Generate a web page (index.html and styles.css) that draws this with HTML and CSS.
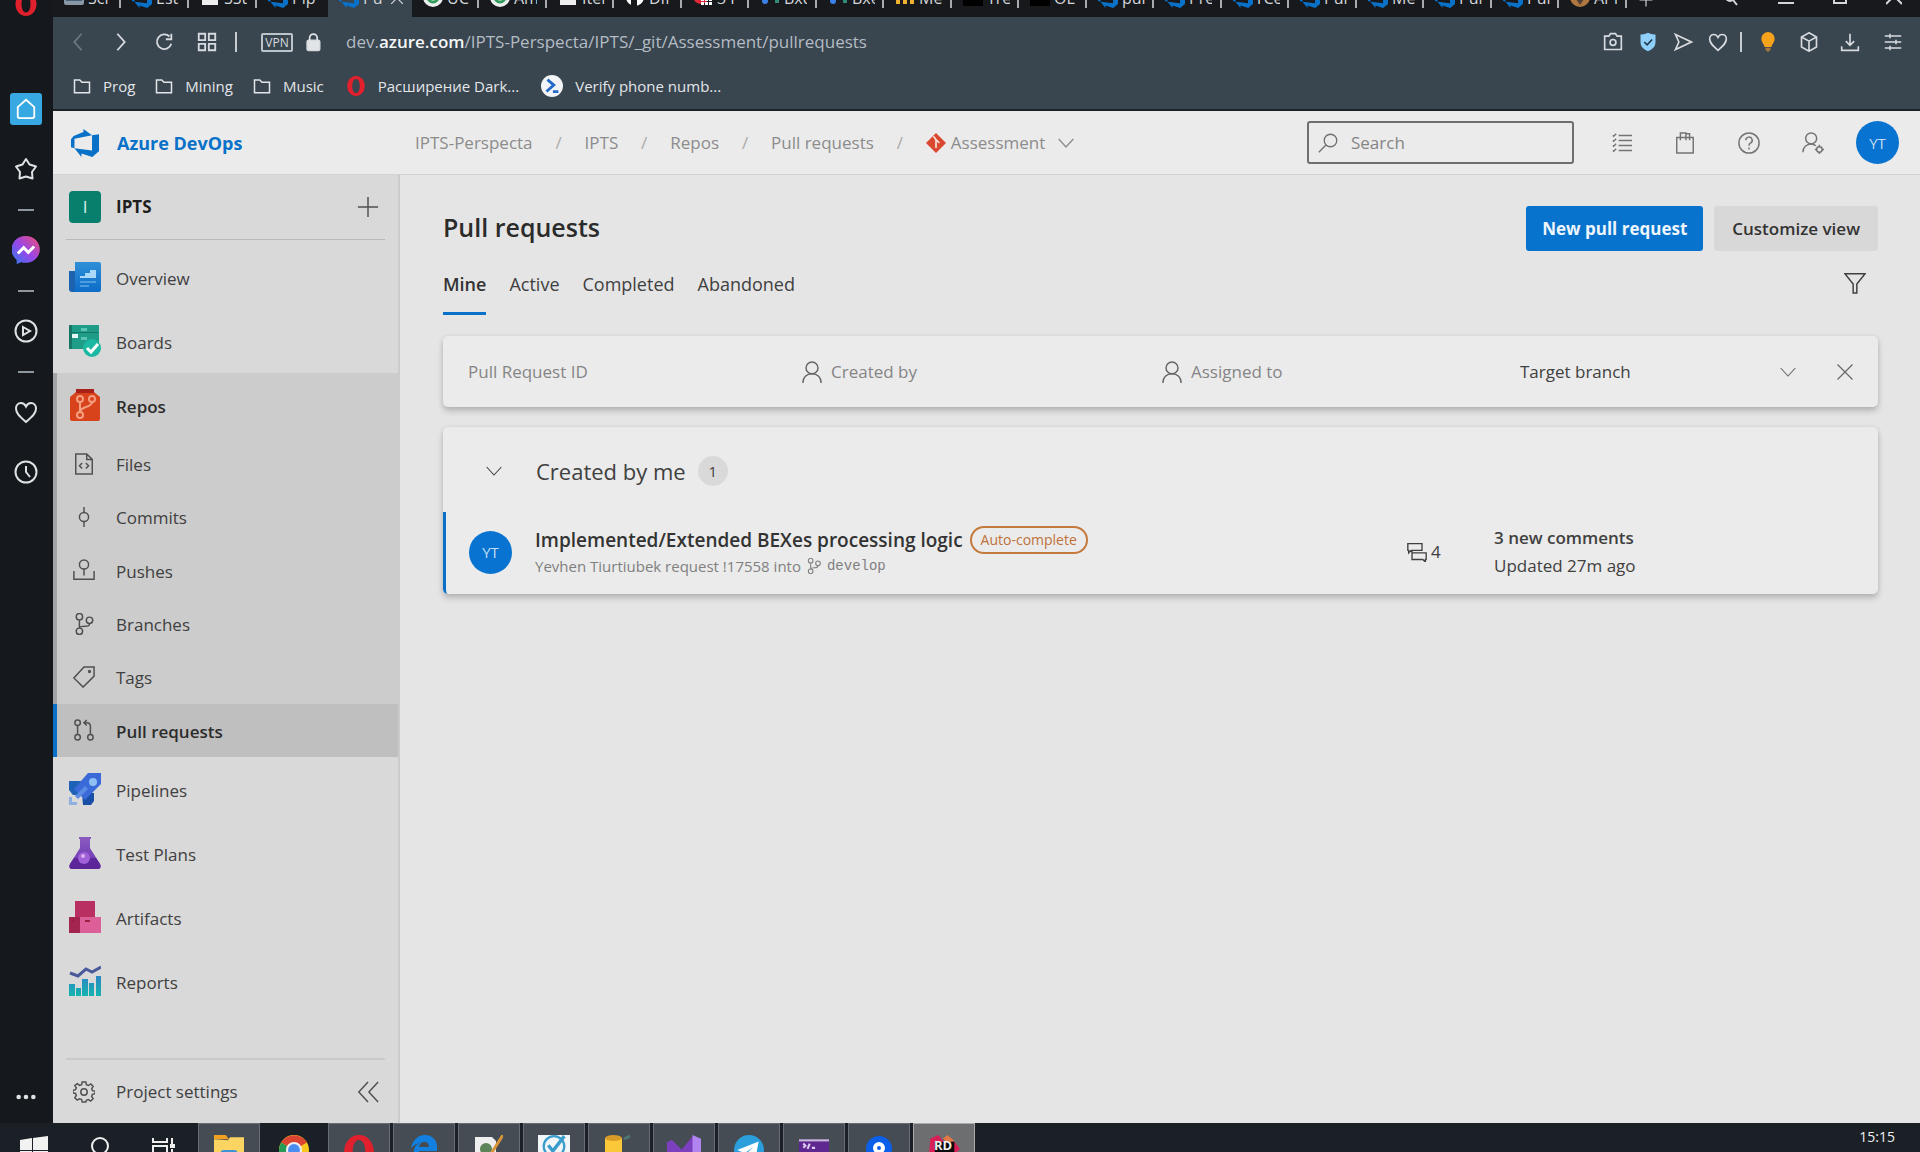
FILE: index.html
```html
<!DOCTYPE html>
<html lang="en">
<head>
<meta charset="utf-8">
<title>Pull requests - Azure DevOps</title>
<meta name="viewport" content="width=device-width, initial-scale=1">
<link rel="stylesheet" href="styles.css">
</head>
<body>
<svg class="sprite" aria-hidden="true">
  <defs>
    <linearGradient id="g-msg" x1="0" y1="1" x2="1" y2="0"><stop offset="0" stop-color="#2d7cf0"/><stop offset=".5" stop-color="#9a45e8"/><stop offset="1" stop-color="#f0506e"/></linearGradient>
    <linearGradient id="g-blue" x1="0" y1="0" x2="0" y2="1"><stop offset="0" stop-color="#2f90d8"/><stop offset="1" stop-color="#0c6cc8"/></linearGradient>
    <linearGradient id="g-flask" x1="0" y1="0" x2="0" y2="1"><stop offset="0" stop-color="#8a5cc0"/><stop offset="1" stop-color="#6a30b0"/></linearGradient>
    <linearGradient id="g-bar" x1="0" y1="0" x2="0" y2="1"><stop offset="0" stop-color="#2b86c4"/><stop offset="1" stop-color="#15b5b0"/></linearGradient>
  </defs>
  <symbol id="i-azdo" viewBox="0 0 24 24"><path fill="#0972c8" d="M0 8.877L2.247 5.91l8.405-3.416V.022l7.37 5.393L2.966 8.338v8.225L0 15.707zm24-4.45v14.651l-5.753 4.9-9.303-3.057v3.056l-5.978-7.416 15.057 1.798V5.415z"/></symbol>
  <symbol id="i-opera" viewBox="0 0 24 24"><path fill="#e0202c" fill-rule="evenodd" d="M12 0c6 0 10.500 5.200 10.500 12S18 24 12 24 1.500 18.800 1.500 12 6 0 12 0zm0 3.500C9 3.500 7.500 7.500 7.500 12S9 20.500 12 20.500s4.500-4 4.500-8.500S15 3.500 12 3.500z"/></symbol>
  <symbol id="i-monitor" viewBox="0 0 20 20"><rect width="20" height="17" rx="2" fill="#8a97a5"/><rect x="2" y="3" width="16" height="10" fill="#45607a"/></symbol>
  <symbol id="i-doc" viewBox="0 0 20 20"><path fill="#eee" d="M2 0h12l4 4v13H2z"/></symbol>
  <symbol id="i-target" viewBox="0 0 20 20"><circle cx="10" cy="9" r="10" fill="#eee"/><circle cx="10" cy="9" r="5" fill="none" stroke="#2e9b58" stroke-width="3"/><path d="M10 5l4 4" stroke="#d04030" stroke-width="3"/></symbol>
  <symbol id="i-github" viewBox="0 0 20 20"><circle cx="10" cy="9" r="9" fill="#fff"/><path d="M6 19v-7h6v7" fill="#17191c"/></symbol>
  <symbol id="i-redgrid" viewBox="0 0 20 20"><circle cx="8" cy="8" r="8" fill="#e02838"/><path fill="#fff" d="M8 10h3v3H8zm4 0h3v3h-3zm4 0h3v3h-3zM8 14h3v3H8zm4 0h3v3h-3zm4 0h3v3h-3z"/></symbol>
  <symbol id="i-dots2" viewBox="0 0 20 20"><circle cx="5" cy="13" r="3" fill="#3b7fe8"/><rect x="15" y="10" width="4" height="5" fill="#2f8a78"/></symbol>
  <symbol id="i-bars3" viewBox="0 0 20 20"><path fill="#f0b030" d="M1 6h4v10H1zm7 0h4v10H8zm7 0h4v10h-4z"/></symbol>
  <symbol id="i-black" viewBox="0 0 20 20"><rect width="20" height="18" fill="#000"/></symbol>
  <symbol id="i-bear" viewBox="0 0 20 20"><circle cx="10" cy="9" r="10" fill="#b07840"/><path d="M6 11l4 6 4-6z" fill="#504038"/></symbol>

  <symbol id="i-back" viewBox="0 0 24 24"><path d="M16 3l-8 9 8 9"/></symbol>
  <symbol id="i-fwd" viewBox="0 0 24 24"><path d="M8 3l8 9-8 9"/></symbol>
  <symbol id="i-reload" viewBox="0 0 24 24"><path d="M20 14a8 8 0 1 1-2-8M20 3v6h-6"/></symbol>
  <symbol id="i-grid" viewBox="0 0 24 24"><path d="M3 3h7v7H3zM14 3h7v7h-7zM3 14h7v7H3zM14 14h7v7h-7z"/></symbol>
  <symbol id="i-lock" viewBox="0 0 24 24"><rect x="5" y="10" width="15" height="12" rx="2" fill="#e2e5e8"/><path d="M8 11V7a4.500 4.500 0 0 1 9 0v4" stroke="#e2e5e8"/></symbol>
  <symbol id="i-camera" viewBox="0 0 24 24"><path d="M2 5h5l2-3h6l2 3h5v16H2z"/><circle cx="12" cy="12.500" r="3.500"/></symbol>
  <symbol id="i-shield" viewBox="0 0 24 24"><path fill="#8fd0fb" stroke="none" d="M12 1c4 2 7 2 9 2v9c0 6-4 9-9 11-5-2-9-5-9-11V3c2 0 5 0 9-2z"/><path stroke="#23394a" d="M7.500 12l3.500 3.500L17 9"/></symbol>
  <symbol id="i-send" viewBox="0 0 24 24"><path d="M3 3l19 9-19 9 4-9z"/></symbol>
  <symbol id="i-heart" viewBox="0 0 24 24"><path d="M12 22C5 16 2 13 2 8.500 2 5 4.500 3 7 3s4 1.500 5 3.500C13 4.500 14.500 3 17 3s5 2 5 5.500C22 13 19 16 12 22z"/></symbol>
  <symbol id="i-bulb" viewBox="0 0 24 24"><path fill="#f5a31c" stroke="none" d="M12 0a8 8 0 0 1 8 8c0 4-3 6-4 10H8C7 14 4 12 4 8a8 8 0 0 1 8-8z"/><path fill="#a07840" stroke="none" d="M9 19h6v3l-3 2-3-2z"/></symbol>
  <symbol id="i-cube" viewBox="0 0 24 24"><path d="M12 1l9 5v12l-9 5-9-5V6zM3 6l9 5 9-5M12 11v12"/></symbol>
  <symbol id="i-download" viewBox="0 0 24 24"><path d="M12 2v14M7 11l5 5 5-5M2 17v5h20v-5"/></symbol>
  <symbol id="i-sliders" viewBox="0 0 24 24"><path d="M1 4h22M1 12h22M1 20h22M8 1v6M16 9v6M8 17v6"/></symbol>
  <symbol id="i-folder" viewBox="0 0 24 24"><path d="M2 4h7l3 3h10v14H2z"/></symbol>
  <symbol id="i-ps" viewBox="0 0 24 24"><circle cx="12" cy="12" r="12" fill="#f2f4f6" stroke="none"/><path stroke="#2468c8" stroke-width="3" d="M7 5l7 6-8 7M13 18h6"/></symbol>

  <symbol id="i-home" viewBox="0 0 24 24"><path d="M3 10l9-8 9 8v10q0 2-2 2H5q-2 0-2-2z"/></symbol>
  <symbol id="i-star" viewBox="0 0 24 24"><path stroke-linejoin="round" d="M12 2l3.500 5.500 6.500 2-4 5.500.5 6.500-6.500-2-6.500 2L6 15 2 9.500l6.500-2z"/></symbol>
  <symbol id="i-messenger" viewBox="0 0 24 24"><path fill="url(#g-msg)" stroke="none" d="M12 0a12 11.500 0 1 1-4 22.400L4 24v-3.500A11.500 11.500 0 0 1 12 0z"/><path stroke="#fff" stroke-width="2.500" d="M5 15l5-5 4 4 5-5"/></symbol>
  <symbol id="i-play" viewBox="0 0 24 24"><circle cx="12" cy="12" r="10.500"/><path d="M9 8l7 4-7 4z"/></symbol>
  <symbol id="i-clock" viewBox="0 0 24 24"><circle cx="12" cy="12" r="10.500"/><path d="M12 6v6l4 5"/></symbol>
  <symbol id="i-more" viewBox="0 0 24 24"><g fill="#dfe2e5" stroke="none"><circle cx="4" cy="12" r="2.500"/><circle cx="12" cy="12" r="2.500"/><circle cx="20" cy="12" r="2.500"/></g></symbol>

  <symbol id="i-git" viewBox="0 0 24 24"><path fill="#d9482f" stroke="none" d="M12 0l12 12-12 12L0 12z"/><path stroke="#f6e4dc" stroke-width="2" d="M9 4l3 4v10M12 8l4 4"/></symbol>
  <symbol id="i-chev" viewBox="0 0 24 24"><path d="M1 6l11 12L23 6"/></symbol>
  <symbol id="i-search" viewBox="0 0 24 24"><circle cx="15" cy="9" r="7.500"/><path d="M9.500 14.500L1 23"/></symbol>
  <symbol id="i-list" viewBox="0 0 24 24"><path d="M8 3h16M8 9h16M8 15h16M8 21h16M1 3l1 1 3-3M1 9l1 1 3-3M1 15l1 1 3-3M1 21l1 1 3-3"/></symbol>
  <symbol id="i-bag" viewBox="0 0 24 24"><path d="M3 6h18v17H3zM7 9V1h6v8M13 2h4v7"/></symbol>
  <symbol id="i-help" viewBox="0 0 24 24"><circle cx="12" cy="12" r="11"/><path d="M8.500 9a3.500 3.500 0 1 1 5 3.200c-1 .6-1.500 1.300-1.500 2.800M12 17v2"/></symbol>
  <symbol id="i-usergear" viewBox="0 0 24 24"><circle cx="10" cy="7" r="6"/><path d="M1 22c0-5 4-9 9-9 2 0 4 1 5 2"/><circle cx="19" cy="19" r="3"/><path d="M19 14v2M19 22v2M14 19h2M22 19h2"/></symbol>
  <symbol id="i-user" viewBox="0 0 24 24"><circle cx="12" cy="7.500" r="6.500"/><path d="M2 24c0-6 4-10 10-10s10 4 10 10"/></symbol>
  <symbol id="i-plus" viewBox="0 0 24 24"><path d="M12 1v22M1 12h22"/></symbol>
  <symbol id="i-x" viewBox="0 0 24 24"><path d="M2 2l20 20M22 2L2 22"/></symbol>
  <symbol id="i-funnel" viewBox="0 0 24 24"><path d="M1 2h22l-9 11v10h-4V13z"/></symbol>
  <symbol id="i-collapse" viewBox="0 0 24 24"><path d="M12 1L2 12l10 11M23 1L13 12l10 11"/></symbol>
  <symbol id="i-gear" viewBox="0 0 24 24"><path d="M10 1h4l.6 3 2.200.9L19.400 3.200l2.600 2.700-1.600 2.500.8 2.100 2.800.5v3l-2.800.6-.9 2.200 1.700 2.500-2.700 2.600-2.500-1.600-2.200.8L14 23h-4l-.6-2.900-2.200-.8-2.500 1.600L2 18.300l1.600-2.500-.8-2.200L0 13v-3l2.800-.5.8-2.100L2 4.900l2.700-2 2.500 1.900L9.400 4z"/><circle cx="12" cy="12" r="3.500"/></symbol>
  <symbol id="i-file" viewBox="0 0 24 24"><path d="M3 1h12l6 6v16H3zM15 1v6h6M10 11l-3 3 3 3M14 11l3 3-3 3"/></symbol>
  <symbol id="i-commit" viewBox="0 0 24 24"><circle cx="12" cy="12" r="5"/><path d="M12 1v6M12 17v6"/></symbol>
  <symbol id="i-push" viewBox="0 0 24 24"><circle cx="12" cy="6" r="5"/><path d="M12 11v7M1 13v9h22v-9"/></symbol>
  <symbol id="i-branch" viewBox="0 0 24 24"><circle cx="7" cy="4" r="3.500"/><circle cx="7" cy="20" r="3.500"/><circle cx="18" cy="8" r="3.500"/><path d="M7 7.500v9M18 11.500c0 3-2 3-5 3s-6 0-6 2"/></symbol>
  <symbol id="i-tag" viewBox="0 0 24 24"><path d="M12 1h11v10L11 23 1 13z"/><circle cx="18" cy="6" r="1"/></symbol>
  <symbol id="i-pr" viewBox="0 0 24 24"><circle cx="5" cy="4" r="3"/><circle cx="5" cy="20" r="3"/><circle cx="19" cy="20" r="3"/><path d="M5 7v10M19 17V8q0-4-4-4h-3M15 1l-3 3 3 3"/></symbol>
  <symbol id="i-comments" viewBox="0 0 24 24"><path d="M1 2h17v8H5l-3 3v-3H1zM6 10v3h17v8h-1v3l-3-3H6v-8"/></symbol>

  <symbol id="p-overview" viewBox="0 0 32 32"><path fill="#1c62ae" d="M0 10h8v21H3q-3 0-3-3z"/><path fill="url(#g-blue)" d="M6 1h24q2 0 2 2v26q0 2-2 2H3q3 0 3-3z"/><path fill="#a9d8f8" d="M11 15h5v-3h5V9h6v8H11z"/><path fill="#4b9ce0" d="M11 20h16v2H11zM11 24h9v2h-9z"/></symbol>
  <symbol id="p-boards" viewBox="0 0 32 32"><path fill="#1f9c88" d="M1 0h29v24H1q-1 0-1-1V1q0-1 1-1z"/><path fill="#177565" d="M0 0h3v24H0zM3 7h26v1H3z"/><path fill="#5cc4b2" d="M12 3h6v3h-6zM12 12h6v3h-6z"/><path fill="#e8f6f3" d="M3 9h6v4H3z"/><circle cx="23" cy="23" r="9" fill="#1cb8a2"/><path fill="none" stroke="#fff" stroke-width="3" d="M18 23l4 4 7-8"/></symbol>
  <symbol id="p-repos" viewBox="0 0 32 32"><path fill="#d9431c" d="M7 3h18l6 5v22q0 2-2 2H3q-2 0-2-2V8z"/><path fill="#a8201a" d="M7 0h18v4H7z"/><g fill="none" stroke="#f4a080" stroke-width="2"><circle cx="11" cy="10" r="3"/><circle cx="23" cy="10" r="3"/><circle cx="11" cy="26" r="3"/><path d="M11 13v10M23 13c0 6-12 4-12 10"/></g></symbol>
  <symbol id="p-pipelines" viewBox="0 0 32 32"><path fill="#1e62b8" d="M0 8h12v14H4l-4-5z"/><path fill="#1a4fa8" d="M13 20h12v8l-3 4h-8z"/><path fill="#3a6ad8" d="M19 0h13v11L16 27 5 16z"/><circle cx="24" cy="9" r="4" fill="#8fc0f4"/><path fill="#5b8be4" d="M16 13l3 3-10 10-3-3z"/><path fill="#8fb0e0" d="M0 24h3v5h5v3H0z"/></symbol>
  <symbol id="p-flask" viewBox="0 0 32 32"><path fill="url(#g-flask)" d="M10 0h12v2h-1v9l10 16q2 5-3 5H4q-5 0-3-5l10-16V2h-1z"/><path fill="#5c259a" d="M5 21h22l4 6q2 5-3 5H4q-5 0-3-5z"/><circle cx="15" cy="21" r="6" fill="#a060d8"/><circle cx="14" cy="19" r="2" fill="#d8b0f0"/></symbol>
  <symbol id="p-artifacts" viewBox="0 0 32 32"><path fill="#b92f62" d="M6 0h20v17H6z"/><path fill="#a3244e" d="M0 16h12v16H0z"/><path fill="#dc5f98" d="M11 16h21v16H11z"/><path fill="#9a2048" d="M16 19h5v2h-5zM3 18h2v3H3z"/></symbol>
  <symbol id="p-reports" viewBox="0 0 32 32"><path fill="url(#g-bar)" d="M0 19h6v12H0zM7 23h5v8H7zM13 14h6v17h-6zM20 18h5v13h-5zM27 11h5v20h-5z"/><path fill="none" stroke="#4a5a9a" stroke-width="3" d="M1 8l8 3 8-7 6 3 9-5"/></symbol>

  <symbol id="t-win" viewBox="0 0 28 28"><path fill="#f2f2f2" d="M0 4l12-2v12H0zM13 2l15-2v14H13zM0 15h12v12L0 25zM13 15h15v13l-15-1z"/></symbol>
  <symbol id="t-search" viewBox="0 0 28 28"><circle cx="15" cy="10" r="8"/><path d="M9 16l-7 8"/></symbol>
  <symbol id="t-view" viewBox="0 0 28 28"><path d="M3 2v4h14V2M3 10h14v14H3zM22 2v6M22 13v11"/><path fill="#eee" stroke="none" d="M20 8h5v4h-5z"/></symbol>
  <symbol id="t-folder" viewBox="0 0 28 28"><path fill="#f0a020" d="M0 0h11l3 4H0z"/><path fill="#fcd462" d="M0 4l13 1 2-3h13v24H0z"/><path fill="#3d92d8" d="M6 26V17q0-3 3-3h10q3 0 3 3v9z"/></symbol>
  <symbol id="t-chrome" viewBox="0 0 28 28"><circle cx="14" cy="14" r="14" fill="#f8c820"/><path fill="#dc4432" d="M14 14L2 7a14 14 0 0 1 24 0z"/><path fill="#279a55" d="M14 14L2 7a14 14 0 0 0 10 21z"/><circle cx="14" cy="14" r="6.500" fill="#4a8cf0" stroke="#eee" stroke-width="2"/></symbol>
  <symbol id="t-edge" viewBox="0 0 28 28"><path fill="#1180e0" d="M1 13C3 4 9 0 15 0c8 0 12 6 12 12v4H9c0 8 10 9 17 5v6C14 32 2 27 4 15c1-5 5-7 8-8-3 1-7 2-11 6zm8-1h10c0-7-9-7-10 0z"/></symbol>
  <symbol id="t-note" viewBox="0 0 28 28"><path fill="#eee" d="M0 2h17l4 4v22H0z"/><circle cx="11" cy="14" r="6" fill="#5d8458"/><path stroke="#d79538" stroke-width="3" d="M28 0L14 22"/></symbol>
  <symbol id="t-todo" viewBox="0 0 28 28"><path fill="#f2f6f8" d="M0 0h28v28H0z"/><circle cx="14" cy="10" r="9" fill="none" stroke="#3a9ccc" stroke-width="2"/><path fill="none" stroke="#3a9ccc" stroke-width="3" d="M9 9l4 5 10-13"/></symbol>
  <symbol id="t-db" viewBox="0 0 28 28"><path fill="#fac838" d="M0 3h17v25H0z"/><ellipse cx="8.500" cy="3" rx="8.500" ry="3" fill="#d99b28"/><path stroke="#4e7774" stroke-width="3" d="M19 4l6-3M14 19h10"/></symbol>
  <symbol id="t-vs" viewBox="0 0 28 28"><path fill="#7c40bf" d="M0 6l4-2 8 8L22 0v28H17l-5-8-8 6-4-2z"/><path fill="#b184f0" d="M21 0l7 3v25h-7z"/></symbol>
  <symbol id="t-telegram" viewBox="0 0 28 28"><circle cx="14" cy="14" r="14" fill="#2a9fdb"/><path fill="#fff" d="M3 14l20-8-3 16-8-5 6-6-8 6z"/></symbol>
  <symbol id="t-term" viewBox="0 0 28 28"><path fill="#5f2890" d="M0 4h28v24H0z"/><path fill="#c8b8d8" d="M0 4h28v2H0z"/><path fill="none" stroke="#ddc8ee" d="M4 8l2 2-2 2M8 13l2-5M12 12h3"/></symbol>
  <symbol id="t-pin" viewBox="0 0 28 28"><circle cx="14" cy="14" r="13" fill="#0b5fe8"/><circle cx="14" cy="13" r="4" fill="none" stroke="#fff" stroke-width="4"/></symbol>
  <symbol id="t-rider" viewBox="0 0 28 28"><path fill="#d91f58" d="M2 3l7-3 5 6 9 0 5 6-5 5 2 11H0z"/><path fill="#e07848" d="M13 3l4-3 6 5-6 2z"/><path fill="#0a0a0a" d="M6 6h17v17H6z"/></symbol>
</svg>

<div class="browser">
  <aside class="rail">
    <a class="rail-logo" href="#" aria-label="Opera menu"><svg class="ic24"><use href="#i-opera"/></svg></a>
    <div class="rail-items">
      <a class="rail-home" href="#" aria-label="Start page"><svg class="ic22"><use href="#i-home"/></svg></a>
      <a href="#" aria-label="Bookmarks"><svg class="ic24"><use href="#i-star"/></svg></a>
      <span class="dash"></span>
      <a href="#" aria-label="Messenger"><svg class="ic28"><use href="#i-messenger"/></svg></a>
      <span class="dash"></span>
      <a href="#" aria-label="Player"><svg class="ic24"><use href="#i-play"/></svg></a>
      <span class="dash"></span>
      <a href="#" aria-label="Favourites"><svg class="ic24"><use href="#i-heart"/></svg></a>
      <a href="#" aria-label="History"><svg class="ic24"><use href="#i-clock"/></svg></a>
    </div>
    <button class="rail-more" aria-label="More"><svg class="ic22"><use href="#i-more"/></svg></button>
  </aside>

  <div class="window">
    <div class="tabstrip">
      <div class="tab"><svg class="ic20"><use href="#i-monitor"/></svg><span>Scr</span></div>
      <div class="tab"><svg class="ic20"><use href="#i-azdo"/></svg><span>Esti</span></div>
      <div class="tab"><svg class="ic20"><use href="#i-doc"/></svg><span>SSt</span></div>
      <div class="tab tab-last"><svg class="ic20"><use href="#i-azdo"/></svg><span>Pip</span></div>
      <div class="tab tab-active"><svg class="ic20"><use href="#i-azdo"/></svg><span>Pu</span><svg class="ic14"><use href="#i-x"/></svg></div>
      <div class="tab"><svg class="ic20"><use href="#i-target"/></svg><span>UC</span></div>
      <div class="tab"><svg class="ic20"><use href="#i-target"/></svg><span>Am</span></div>
      <div class="tab"><svg class="ic20"><use href="#i-doc"/></svg><span>Iter</span></div>
      <div class="tab"><svg class="ic20"><use href="#i-github"/></svg><span>DIf</span></div>
      <div class="tab"><svg class="ic20"><use href="#i-redgrid"/></svg><span>3 Pi</span></div>
      <div class="tab"><svg class="ic20"><use href="#i-dots2"/></svg><span>Bxq</span></div>
      <div class="tab"><svg class="ic20"><use href="#i-dots2"/></svg><span>Bxe</span></div>
      <div class="tab"><svg class="ic20"><use href="#i-bars3"/></svg><span>Me</span></div>
      <div class="tab"><svg class="ic20"><use href="#i-black"/></svg><span>Tre</span></div>
      <div class="tab"><svg class="ic20"><use href="#i-black"/></svg><span>OL</span></div>
      <div class="tab"><svg class="ic20"><use href="#i-azdo"/></svg><span>pull</span></div>
      <div class="tab"><svg class="ic20"><use href="#i-azdo"/></svg><span>Pre</span></div>
      <div class="tab"><svg class="ic20"><use href="#i-azdo"/></svg><span>rCe</span></div>
      <div class="tab"><svg class="ic20"><use href="#i-azdo"/></svg><span>Pull</span></div>
      <div class="tab"><svg class="ic20"><use href="#i-azdo"/></svg><span>Me</span></div>
      <div class="tab"><svg class="ic20"><use href="#i-azdo"/></svg><span>Pull</span></div>
      <div class="tab"><svg class="ic20"><use href="#i-azdo"/></svg><span>Pull</span></div>
      <div class="tab"><svg class="ic20"><use href="#i-bear"/></svg><span>API</span></div>
      <button class="winbtn newtab" aria-label="New tab"><svg class="ic14"><use href="#i-plus"/></svg></button>
      <div class="wincontrols">
        <button class="winbtn" aria-label="Search tabs"><svg class="ic16" viewBox="0 0 16 16"><circle cx="6" cy="5" r="4"/><path d="M9 8l4 5"/></svg></button>
        <button class="winbtn" aria-label="Minimize"><svg class="ic16" viewBox="0 0 16 16"><path d="M0 11h16"/></svg></button>
        <button class="winbtn" aria-label="Maximize"><svg class="ic16" viewBox="0 0 16 16"><path d="M2 0h12v11H2z"/></svg></button>
        <button class="winbtn" aria-label="Close"><svg class="ic16" viewBox="0 0 16 16"><path d="M0-4l16 16M16-4L0 12"/></svg></button>
      </div>
    </div>

    <div class="addressbar">
      <div class="navbtns">
        <button class="dim" aria-label="Back"><svg class="ic22"><use href="#i-back"/></svg></button>
        <button aria-label="Forward"><svg class="ic22"><use href="#i-fwd"/></svg></button>
        <button aria-label="Reload"><svg class="ic22"><use href="#i-reload"/></svg></button>
        <button aria-label="Speed dial"><svg class="ic22"><use href="#i-grid"/></svg></button>
      </div>
      <span class="vline"></span>
      <span class="vpn">VPN</span>
      <svg class="ic20 lock"><use href="#i-lock"/></svg>
      <span class="url">dev.<b>azure.com</b>/IPTS-Perspecta/IPTS/_git/Assessment/pullrequests</span>
      <div class="tools">
        <svg class="ic20"><use href="#i-camera"/></svg>
        <svg class="ic20"><use href="#i-shield"/></svg>
        <svg class="ic20"><use href="#i-send"/></svg>
        <svg class="ic20"><use href="#i-heart"/></svg>
      </div>
      <span class="vline"></span>
      <div class="tools tools-wide">
        <svg class="ic20"><use href="#i-bulb"/></svg>
        <svg class="ic20"><use href="#i-cube"/></svg>
        <svg class="ic20"><use href="#i-download"/></svg>
        <svg class="ic18"><use href="#i-sliders"/></svg>
      </div>
    </div>

    <nav class="bookmarks" aria-label="Bookmarks bar">
      <a href="#"><svg class="ic18"><use href="#i-folder"/></svg>Prog</a>
      <a href="#"><svg class="ic18"><use href="#i-folder"/></svg>Mining</a>
      <a href="#"><svg class="ic18"><use href="#i-folder"/></svg>Music</a>
      <a class="site" href="#"><svg class="ic20 nostroke"><use href="#i-opera"/></svg>Расширение Dark...</a>
      <a class="site" href="#"><svg class="ic22"><use href="#i-ps"/></svg>Verify phone numb...</a>
    </nav>

    <div class="page">
      <header class="topbar">
        <a class="brand" href="#"><svg class="ic28 nostroke"><use href="#i-azdo"/></svg>Azure DevOps</a>
        <nav class="crumbs" aria-label="Breadcrumb">
          <a href="#">IPTS-Perspecta</a><i>/</i><a href="#">IPTS</a><i>/</i><a href="#">Repos</a><i>/</i><a href="#">Pull requests</a><i>/</i>
          <a class="repo" href="#"><svg class="ic20"><use href="#i-git"/></svg>Assessment<svg class="ic16 chev"><use href="#i-chev"/></svg></a>
        </nav>
        <label class="search"><svg class="ic20"><use href="#i-search"/></svg><input type="search" placeholder="Search" aria-label="Search"></label>
        <div class="actions">
          <button aria-label="Work items"><svg class="ic20"><use href="#i-list"/></svg></button>
          <button aria-label="Marketplace"><svg class="ic22"><use href="#i-bag"/></svg></button>
          <button aria-label="Help"><svg class="ic22"><use href="#i-help"/></svg></button>
          <button aria-label="User settings"><svg class="ic22"><use href="#i-usergear"/></svg></button>
        </div>
        <button class="avatar" aria-label="Account">YT</button>
      </header>

      <div class="columns">
        <nav class="sidebar" aria-label="Project">
          <div class="project"><span class="tile">I</span><strong>IPTS</strong><button aria-label="Create"><svg class="ic22"><use href="#i-plus"/></svg></button></div>
          <a class="hub" href="#"><svg class="ic32"><use href="#p-overview"/></svg>Overview</a>
          <a class="hub" href="#"><svg class="ic32"><use href="#p-boards"/></svg>Boards</a>
          <div class="group">
            <a class="hub strong" href="#"><svg class="ic32"><use href="#p-repos"/></svg>Repos</a>
            <div class="sub">
              <a href="#"><svg class="ic22"><use href="#i-file"/></svg>Files</a>
              <a href="#"><svg class="ic22"><use href="#i-commit"/></svg>Commits</a>
              <a href="#"><svg class="ic22"><use href="#i-push"/></svg>Pushes</a>
              <a href="#"><svg class="ic22"><use href="#i-branch"/></svg>Branches</a>
              <a href="#"><svg class="ic22"><use href="#i-tag"/></svg>Tags</a>
              <a class="selected" href="#" aria-current="page"><svg class="ic22"><use href="#i-pr"/></svg>Pull requests</a>
            </div>
          </div>
          <a class="hub" href="#"><svg class="ic32"><use href="#p-pipelines"/></svg>Pipelines</a>
          <a class="hub" href="#"><svg class="ic32"><use href="#p-flask"/></svg>Test Plans</a>
          <a class="hub" href="#"><svg class="ic32"><use href="#p-artifacts"/></svg>Artifacts</a>
          <a class="hub" href="#"><svg class="ic32"><use href="#p-reports"/></svg>Reports</a>
          <div class="settings"><a href="#"><svg class="ic22"><use href="#i-gear"/></svg>Project settings</a><button aria-label="Collapse"><svg class="ic22"><use href="#i-collapse"/></svg></button></div>
        </nav>

        <main class="content">
          <div class="heading">
            <h1>Pull requests</h1>
            <button class="btn primary">New pull request</button>
            <button class="btn">Customize view</button>
          </div>
          <div class="pivots">
            <a class="on" href="#">Mine</a><a href="#">Active</a><a href="#">Completed</a><a href="#">Abandoned</a>
            <button class="funnel" aria-label="Filter"><svg class="ic22"><use href="#i-funnel"/></svg></button>
          </div>

          <form class="card filters">
            <label><input type="text" placeholder="Pull Request ID" aria-label="Pull Request ID"></label>
            <label><svg class="ic22"><use href="#i-user"/></svg><input type="text" placeholder="Created by" aria-label="Created by"></label>
            <label><svg class="ic22"><use href="#i-user"/></svg><input type="text" placeholder="Assigned to" aria-label="Assigned to"></label>
            <label class="branch"><select aria-label="Target branch"><option>Target branch</option></select><svg class="ic16"><use href="#i-chev"/></svg></label>
            <button type="button" aria-label="Close filters"><svg class="ic18"><use href="#i-x"/></svg></button>
          </form>

          <section class="card">
            <div class="group-head"><button aria-label="Collapse group"><svg class="ic16"><use href="#i-chev"/></svg></button><h2>Created by me</h2><span class="count">1</span></div>
            <article class="pr">
              <span class="avatar">YT</span>
              <div class="pr-main">
                <div class="pr-title"><a href="#">Implemented/Extended BEXes processing logic</a><span class="pill">Auto-complete</span></div>
                <div class="pr-meta">Yevhen Tiurtiubek request !17558 into <svg class="ic16"><use href="#i-branch"/></svg><code>develop</code></div>
              </div>
              <div class="pr-comments"><svg class="ic20"><use href="#i-comments"/></svg>4</div>
              <div class="pr-updates"><strong>3 new comments</strong><span>Updated 27m ago</span></div>
            </article>
          </section>
        </main>
      </div>
    </div>
  </div>
</div>

<footer class="taskbar">
  <button class="sys" aria-label="Start"><svg class="ic28 nostroke"><use href="#t-win"/></svg></button>
  <button class="sys" aria-label="Search"><svg class="ic28"><use href="#t-search"/></svg></button>
  <button class="sys" aria-label="Task view"><svg class="ic28"><use href="#t-view"/></svg></button>
  <button class="app open" aria-label="Explorer"><svg class="ic30"><use href="#t-folder"/></svg></button>
  <button class="app" aria-label="Chrome"><svg class="ic30"><use href="#t-chrome"/></svg></button>
  <button class="app open" aria-label="Opera"><svg class="ic34"><use href="#i-opera"/></svg></button>
  <button class="app open" aria-label="Edge"><svg class="ic28"><use href="#t-edge"/></svg></button>
  <button class="app open" aria-label="Notepad"><svg class="ic28"><use href="#t-note"/></svg></button>
  <button class="app open" aria-label="Tasks"><svg class="ic32"><use href="#t-todo"/></svg></button>
  <button class="app open" aria-label="Database"><svg class="ic28"><use href="#t-db"/></svg></button>
  <button class="app open" aria-label="Visual Studio"><svg class="ic34"><use href="#t-vs"/></svg></button>
  <button class="app open" aria-label="Telegram"><svg class="ic30"><use href="#t-telegram"/></svg></button>
  <button class="app open" aria-label="Terminal"><svg class="ic30"><use href="#t-term"/></svg></button>
  <button class="app open" aria-label="Authenticator"><svg class="ic28"><use href="#t-pin"/></svg></button>
  <button class="app open current" aria-label="Remote desktop"><svg class="ic32"><use href="#t-rider"/></svg><span class="rd">RD</span></button>
  <time class="clock">15:15</time>
</footer>
</body>
</html>
```
FILE: styles.css
```css
* { box-sizing: border-box; }

body {
  margin: 0;
  min-height: 100vh;
  display: flex;
  flex-direction: column;
  background: #15191d;
  color: #404040;
  font: 17px/24px "Open Sans", "Noto Sans", sans-serif;
}

a { color: inherit; text-decoration: none; }
button, input, select { font: inherit; color: inherit; background: none; border: 0; padding: 0; margin: 0; }
h1, h2 { margin: 0; font-weight: 400; }

svg { display: block; flex: none; fill: none; stroke: currentColor; stroke-width: 2; }
.sprite { position: absolute; width: 0; height: 0; }
.nostroke { stroke: none; }
.ic14 { width: 14px; height: 14px; }
.ic16 { width: 16px; height: 16px; }
.ic18 { width: 18px; height: 18px; }
.ic20 { width: 20px; height: 20px; }
.ic22 { width: 22px; height: 22px; }
.ic24 { width: 24px; height: 24px; }
.ic28 { width: 28px; height: 28px; }
.ic30 { width: 30px; height: 30px; }
.ic32 { width: 32px; height: 32px; }
.ic34 { width: 34px; height: 34px; }

.browser { flex: 1; display: flex; }

/* Opera side rail */
.rail { width: 53px; flex: none; display: flex; flex-direction: column; align-items: center; padding-right: 1px; color: #dfe2e5; }
.rail-logo { height: 16px; overflow: hidden; display: flex; align-items: flex-end; }
.rail-logo svg { stroke: none; }
.rail-items { display: flex; flex-direction: column; align-items: center; padding-top: 77px; }
.rail-items > a { height: 60px; display: flex; align-items: center; }
.rail-items > .rail-home { width: 32px; height: 32px; margin-bottom: 14px; justify-content: center; background: #38a8e2; border-radius: 3px; color: #fff; }
.dash { width: 16px; height: 2px; margin: 10px 0 9px; background: #8e96a0; }
.rail-more { margin-top: auto; padding-bottom: 15px; }

/* Tabs */
.window { flex: 1; min-width: 0; display: flex; flex-direction: column; }
.tabstrip { height: 17px; overflow: hidden; display: flex; align-items: flex-end; background: #17191d; color: #d4d7da; font-size: 16px; }
.tab { flex: 0 1 68px; min-width: 0; height: 38px; display: flex; align-items: center; gap: 4px; padding-left: 11px; }
.tab-active ~ .tab:nth-child(even) { flex-basis: 67px; }
.tab svg { stroke: none; }
.tab span { width: 23px; overflow: hidden; white-space: nowrap; }
.tab::after { content: ""; width: 2px; height: 20px; margin-left: auto; background: #a8acb0; }
.tab-last::after { background: none; }
.tab-active { flex: 0 0 84px; margin-left: 3px; background: #39454f; }
.tab-active .ic14 { stroke: currentColor; }
.tab-active::after { display: none; }
.winbtn { height: 34px; display: flex; align-items: center; }
.newtab { padding-left: 12px; }
.wincontrols { margin-left: auto; display: flex; gap: 38px; padding-right: 18px; }

/* Address bar */
.addressbar { height: 50px; display: flex; align-items: center; background: #39454f; color: #d7dbdf; padding: 0 18px 0 14px; }
.navbtns { display: flex; gap: 21px; padding-right: 17px; }
.dim { color: #6c7780; }
.vline { width: 2px; height: 20px; background: #c7ccd0; }
.vpn { margin-left: 24px; height: 19px; width: 32px; border: 2px solid #bcc3c9; border-radius: 2px; font-size: 12px; line-height: 15px; text-align: center; }
.lock { margin-left: 10px; }
.url { flex: 1; margin-left: 23px; color: #b4bcc4; white-space: nowrap; overflow: hidden; }
.url b { font-weight: 600; color: #f4f6f8; }
.tools { display: flex; align-items: center; gap: 15px; padding-right: 12px; }
.tools-wide { gap: 21px; padding: 0 0 0 16px; }
.tools-wide .ic18 { margin-left: 3px; }

/* Bookmarks */
.bookmarks { height: 44px; display: flex; align-items: center; gap: 20px; padding: 0 0 5px 20px; background: #39454f; color: #e3e6e9; font-size: 15px; border-bottom: 2px solid #1c2228; }
.bookmarks a { display: flex; align-items: center; gap: 12px; }
.bookmarks .site { padding-left: 2px; }

/* Azure DevOps header */
.page { flex: 1; display: flex; flex-direction: column; background: #e5e5e5; }
.topbar { height: 64px; display: flex; align-items: center; padding: 0 21px 0 18px; background: #ebebeb; border-bottom: 1px solid #d2d2d2; }
.brand { width: 344px; display: flex; align-items: center; gap: 18px; color: #0972c8; font-weight: 700; font-size: 18px; }
.crumbs { flex: 1; display: flex; align-items: center; color: #8c8c8c; white-space: nowrap; font-size: 17px; padding-top: 1px; }
.crumbs i { width: 52px; text-align: center; font-style: normal; color: #aaa; }
.repo { display: flex; align-items: center; gap: 5px; }
.search { width: 267px; height: 43px; display: flex; align-items: center; gap: 13px; padding: 0 9px; border: 2px solid #6e6e6e; border-radius: 3px; color: #6f6f6f; }
.search input { min-width: 0; flex: 1; outline: 0; }
input::placeholder { color: #858585; opacity: 1; }
.actions { display: flex; align-items: center; gap: 42px; padding: 0 32px 0 38px; color: #747474; }
.actions svg, .search svg, .card svg, .sidebar svg { stroke-width: 1.6px; }
.sidebar svg { color: #505050; }
.sidebar .ic32 { stroke: none; }
.chev { margin-left: 8px; }
.avatar { width: 43px; height: 43px; flex: none; display: flex; align-items: center; justify-content: center; border-radius: 50%; background: #0873d0; color: #c4ddf2; font-size: 15px; }

/* Project sidebar */
.columns { flex: 1; display: flex; }
.sidebar { width: 347px; flex: none; display: flex; flex-direction: column; background: #d9d9d9; border-right: 2px solid #cbcbcb; }
.project { height: 65px; margin: 0 13px 5px; padding: 0 6px 0 3px; display: flex; align-items: center; gap: 15px; border-bottom: 1px solid #b9b9b9; color: #1f1f1f; }
.project button { margin-left: auto; }
.tile { width: 32px; height: 32px; display: grid; place-items: center; border-radius: 4px; background: #087f6c; color: #d8efea; }
.hub, .sub a { display: flex; align-items: center; padding-top: 3px; }
.hub svg, .sub svg { margin-bottom: 3px; }
.hub { height: 64px; gap: 15px; padding-left: 16px; }
.group { background: #ccc; box-shadow: inset 4px 0 #a3a4a8; }
.strong, .selected { font-weight: 600; color: #2c2c2c; }
.sub { height: 320px; display: grid; grid-auto-rows: 1fr; }
.sub a { gap: 21px; padding-left: 20px; }
.sub .selected { background: #bfbfbf; box-shadow: inset 4px 0 #0972c8; }
.settings { margin: auto 13px 0; height: 65px; padding: 0 6px 0 7px; display: flex; align-items: center; justify-content: space-between; border-top: 2px solid #cacaca; }
.settings a { display: flex; align-items: center; gap: 21px; }

/* Content */
.content { flex: 1; min-width: 0; padding: 31px 42px 0 43px; }
.heading { display: flex; gap: 11px; height: 45px; }
.heading h1 { margin-right: auto; font-size: 25px; line-height: 42px; font-weight: 600; color: #2b2b2b; }
.btn { height: 45px; padding: 0 18px; border-radius: 3px; background: #d8d8d8; color: #333; font-weight: 600; white-space: nowrap; }
.primary { padding: 0 16px; background: #0873cc; color: #eef5fb; font-weight: 700; }
.pivots { height: 85px; display: flex; align-items: flex-start; gap: 23px; padding-top: 12px; font-size: 18px; }
.pivots a { height: 52px; padding-top: 9px; border-bottom: 3px solid transparent; }
.pivots .on { font-weight: 600; color: #333; border-color: #0972c8; }
.funnel { margin: 9px 12px 0 auto; }
.funnel svg { stroke-width: 1.6px; }
.card { border-radius: 5px; background: #ebebeb; box-shadow: 0 4px 6px rgba(0,0,0,.2), 0 0 4px rgba(0,0,0,.07); }
.filters { height: 71px; margin-bottom: 20px; padding: 0 24px 0 25px; display: grid; grid-template-columns: 333fr 360fr 359fr 316fr auto; align-items: center; color: #666; }
.filters label { display: flex; align-items: center; gap: 8px; }
.filters input { min-width: 0; flex: 1; }
.filters select { appearance: none; flex: 1; color: #404040; }
.branch { padding-right: 40px; }
.group-head { height: 85px; display: flex; align-items: center; padding: 2px 0 0 43px; }
.group-head h2 { margin: 0 12px 0 34px; font-size: 22px; }
.count { width: 30px; height: 30px; display: grid; place-items: center; border-radius: 50%; background: #d9d9d9; font-size: 15px; }
.pr { height: 82px; display: flex; align-items: center; padding: 0 0 2px 23px; border-left: 3px solid #0972c8; border-radius: 0 0 0 5px; }
.pr-main { flex: 1; padding-left: 23px; }
.pr-title { display: flex; align-items: center; gap: 7px; font-size: 19px; line-height: 28px; font-weight: 600; color: #333; }
.pill { height: 28px; padding: 0 9px; border: 2px solid #c47a3c; border-radius: 14px; font-size: 14px; line-height: 24px; font-weight: 400; color: #c0713a; }
.pr-meta { display: flex; align-items: center; gap: 5px; font-size: 15px; color: #808080; }
code { font: 14px "Liberation Mono", monospace; }
.pr-comments { width: 87px; display: flex; align-items: center; gap: 4px; }
.pr-updates { width: 384px; display: flex; flex-direction: column; gap: 4px; }
.pr-updates strong { font-weight: 600; }

/* Windows taskbar */
.taskbar { height: 29px; overflow: hidden; display: flex; gap: 3px; padding: 0 25px 0 3px; background: #1a2026; color: #eee; }
.sys { width: 62px; height: 50px; display: flex; justify-content: center; padding-top: 13px; }
.app { width: 62px; height: 50px; display: flex; justify-content: center; align-items: flex-start; padding-top: 12px; }
.app svg { stroke: none; }
.open { background: #454c53; border: 1px solid #666d73; border-bottom: 0; padding-top: 11px; }
.current { position: relative; background: #6c6e70; border-color: #a8aaac; }
.rd { position: absolute; top: 13px; left: 20px; font-size: 13px; line-height: 16px; font-weight: 700; }
.clock { margin-left: auto; font-size: 14px; line-height: 27px; }
```
